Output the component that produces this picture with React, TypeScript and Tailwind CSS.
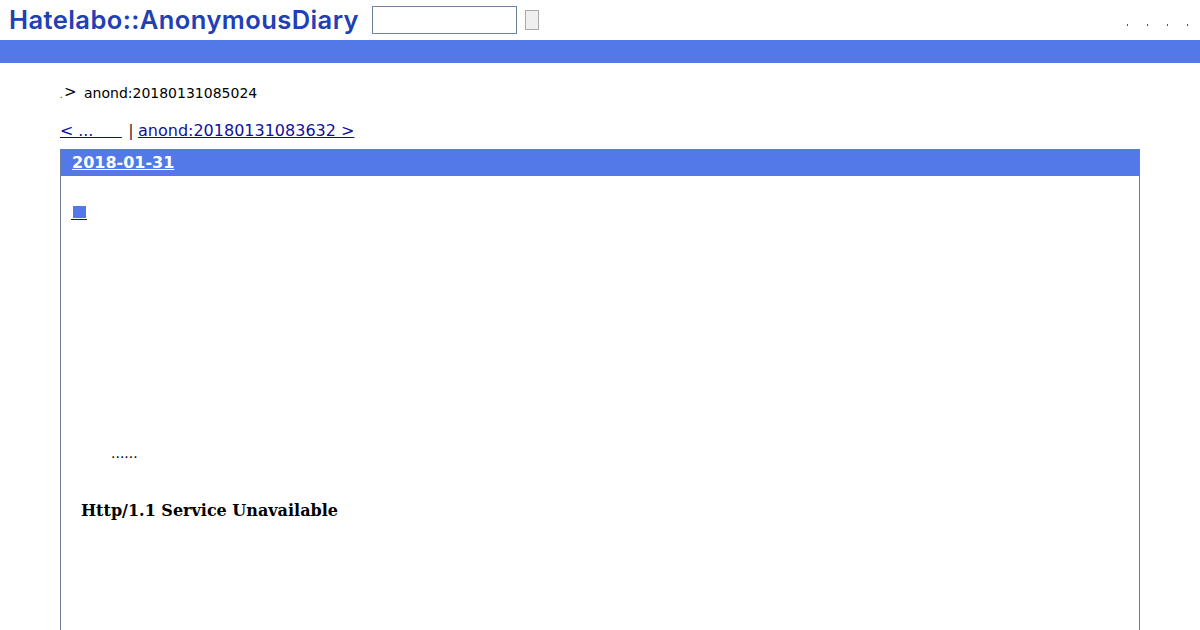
export default function App() {
  return (
    <div className="h-[630px] overflow-hidden bg-white font-['DejaVu_Sans',sans-serif] text-black">
      <div className="flex h-10 items-center">
        <div className="mb-[1px] ml-[9px] w-[363px] font-['Inter',sans-serif] text-[25.5px] leading-[39px] font-semibold tracking-[0.43px] whitespace-nowrap text-[#2040b4]">
          Hatelabo::AnonymousDiary
        </div>
        <input type="text" className="h-[28px] w-[145px] border border-[#6f7f9f] bg-white" />
        <button className="ml-2 h-5 w-[14px] border border-[#a8a8a8] bg-[#efefef]"></button>
        <div className="mr-[12px] ml-auto flex gap-[19px] pt-[9px] text-[1px]">
          <span className="h-[2px] w-px bg-[#555]"></span>
          <span className="h-[2px] w-px bg-[#555]"></span>
          <span className="h-[2px] w-px bg-[#555]"></span>
          <span className="h-[2px] w-px bg-[#555]"></span>
        </div>
      </div>
      <div className="h-[23px] bg-[#5279e7]"></div>

      <div className="px-[60px]">
        <div className="mt-[21px] flex h-[18px] items-center text-[14px] leading-[18px]">
          <span className="mt-[6px] w-[4px] text-[8px] leading-none">.</span>
          <span className="mb-[2px] w-[20px] text-[15px] leading-none">&gt;</span>
          <span>anond:20180131085024</span>
        </div>

        <div className="mt-[19px] flex h-[19px] text-[16px] leading-[19px] whitespace-pre text-[#2a2a2a]">
          <a href="#" className="w-[62px] text-[#10109c] underline [word-spacing:-0.35px]">{"< ...      "}</a>
          <span className="w-[16px] pl-[2px] text-center">|</span>
          <a href="#" className="text-[#10109c] underline">anond:20180131083632 &gt;</a>
        </div>

        <div className="mt-[9px] h-[600px] w-[1080px] border-x border-[#6f7f9f]">
          <div className="h-[27px] bg-[#5279e7] pl-[11px] text-[16px] leading-[27px] font-bold text-white">
            <a href="#" className="underline">2018-01-31</a>
          </div>
          <div>
            <a href="#" className="mt-[30px] ml-[10px] block h-[14px] w-[16px] border-b border-[#10109c] pl-[2px]">
              <span className="block h-[12px] w-[13px] bg-[#5279e7]"></span>
            </a>
            <div className="mt-[224px] ml-[50px] h-[18px] text-[14px] leading-[18px]">......</div>
            <h2 className="mt-[39px] ml-[20px] font-['DejaVu_Serif',serif] text-[16px] leading-[20px] font-bold">
              Http/1.1 Service Unavailable
            </h2>
          </div>
        </div>
      </div>
    </div>
  );
}
